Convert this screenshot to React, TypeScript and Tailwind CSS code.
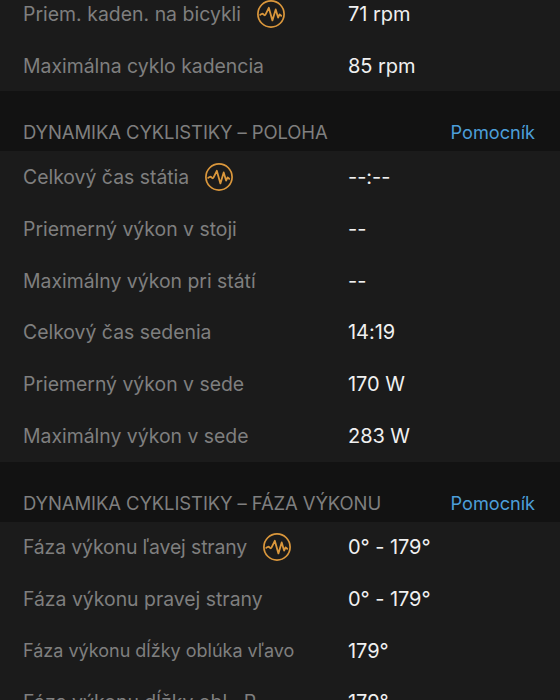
type Row = { label: string; value: string; graph?: boolean; labelClass?: string };

const CADENCE: Row[] = [
  { label: "Priem. kaden. na bicykli", value: "71 rpm", graph: true, labelClass: "text-[19.4px] tracking-[0.03px]" },
  { label: "Maximálna cyklo kadencia", value: "85 rpm" },
];

const POSITION: Row[] = [
  { label: "Celkový čas státia", value: "--:--", graph: true },
  { label: "Priemerný výkon v stoji", value: "--" },
  { label: "Maximálny výkon pri státí", value: "--" },
  { label: "Celkový čas sedenia", value: "14:19" },
  { label: "Priemerný výkon v sede", value: "170 W" },
  { label: "Maximálny výkon v sede", value: "283 W" },
];

const PHASE: Row[] = [
  { label: "Fáza výkonu ľavej strany", value: "0° - 179°", graph: true, labelClass: "text-[19.4px] tracking-[-0.12px]" },
  { label: "Fáza výkonu pravej strany", value: "0° - 179°" },
  { label: "Fáza výkonu dĺžky oblúka vľavo", value: "179°", labelClass: "text-[18px]" },
  { label: "Fáza výkonu dĺžky obl.. P", value: "179°", labelClass: "text-[19.4px] tracking-[0.03px]" },
];

function GraphIcon() {
  return (
    <svg width="30" height="30" viewBox="0 0 30 30" fill="none" stroke="#da973c" className="ml-[14.5px] shrink-0">
      <circle cx="15" cy="15" r="13.1" strokeWidth="1.7" />
      <path
        d="M4.2 15.8c1.2-1.3 2.5-1.3 3.3-.4.9 1.1 1.5 1.1 2.1 0L12.8 8.8l3.6 12.6 3.3-11 2.4 8.2 1.5-3.2 1.6 1.4"
        strokeWidth="1.8"
        strokeLinejoin="round"
        strokeLinecap="round"
      />
    </svg>
  );
}

function Rows({ rows }: { rows: Row[] }) {
  return (
    <div className="bg-[#1b1b1b]">
      {rows.map((row) => (
        <div key={row.label} className="flex h-[51.7px] items-center text-[20px] leading-7">
          <div className="flex w-[348px] shrink-0 items-center pl-[23px] whitespace-nowrap text-[#7f7f7f]">
            <span className={row.labelClass ?? "text-[19.4px]"}>{row.label}</span>
            {row.graph && <GraphIcon />}
          </div>
          <span className="tracking-[-0.05px] whitespace-nowrap text-[#f0f0f0]">{row.value}</span>
        </div>
      ))}
    </div>
  );
}

function Header({ title }: { title: string }) {
  return (
    <div className="flex h-[60px] items-end justify-between bg-[#121212] pr-[25px] pb-[5px] pl-[23px]">
      <h2 className="text-[18.5px] leading-7 tracking-[-0.12px] whitespace-nowrap text-[#7f7f7f]">{title}</h2>
      <button className="text-[18.2px] leading-7 tracking-[-0.05px] text-[#4c9ed9]">Pomocník</button>
    </div>
  );
}

export default function App() {
  return (
    <main className="h-[700px] w-[560px] overflow-hidden bg-[#1b1b1b] font-[Inter,sans-serif]">
      <div className="-mt-3">
        <Rows rows={CADENCE} />
        <Header title="DYNAMIKA CYKLISTIKY – POLOHA" />
        <Rows rows={POSITION} />
        <Header title="DYNAMIKA CYKLISTIKY – FÁZA VÝKONU" />
        <Rows rows={PHASE} />
      </div>
    </main>
  );
}
